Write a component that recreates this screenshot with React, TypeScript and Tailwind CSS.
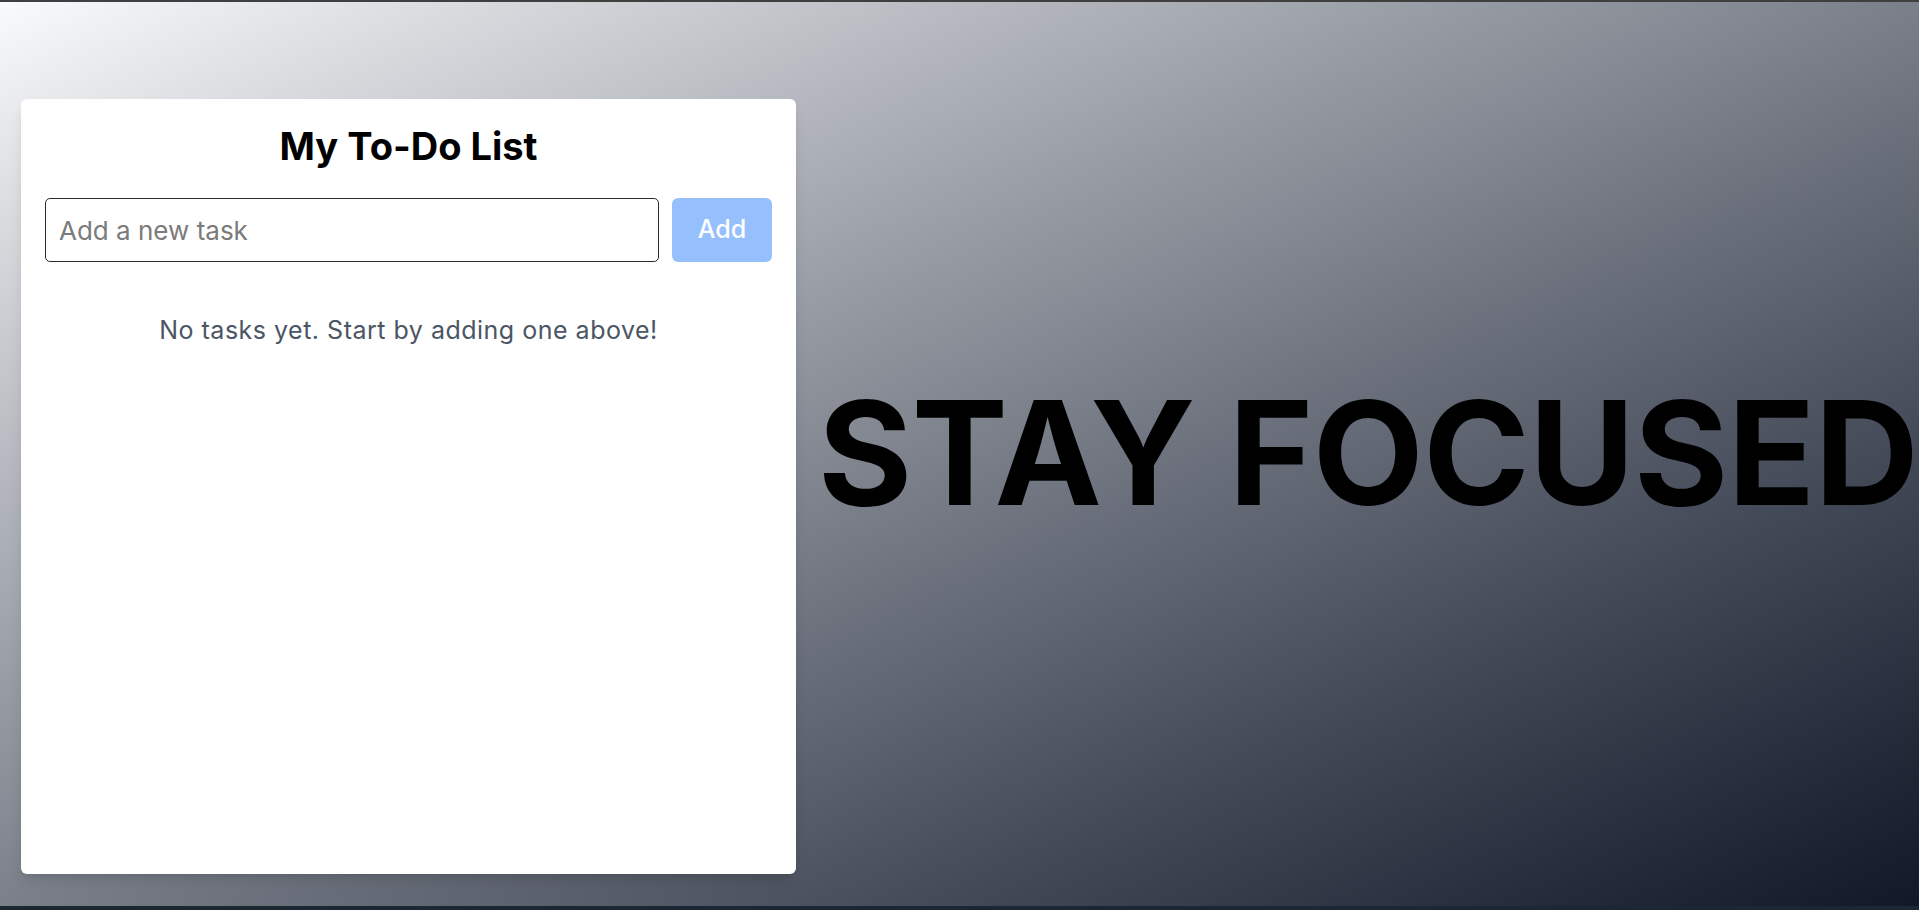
import React, { useState } from "react";

const font = { fontFamily: "Inter, 'Liberation Sans', sans-serif" };

const App = () => {
    const [task, setTask] = useState("");
    const [tasks, setTasks] = useState<string[]>([]);

    const addTask = () => {
        if (!task.trim()) return;
        setTasks([...tasks, task.trim()]);
        setTask("");
    };

    return (
        <div
            className="h-[910px] w-full overflow-hidden flex flex-col bg-[#1b2731]"
            style={font}
        >
            <div className="h-[2px] bg-[#3f3f3f]" />
            <main className="flex-1 flex flex-row overflow-hidden bg-gradient-to-br from-[#f9fafb] to-[#111827]">
                {/* left: the list card */}
                <section className="ml-[21px] mt-[97px] w-[775px] h-[775px] shrink-0 bg-white rounded-md shadow-lg p-6 flex flex-col">
                    <h1 className="mt-[3px] text-center text-[38px] leading-[40px] font-bold text-black">
                        My To-Do List
                    </h1>
                    <div className="flex flex-row gap-[13px] mt-[32px]">
                        <input
                            value={task}
                            onChange={(e) => setTask(e.target.value)}
                            placeholder="Add a new task"
                            className="flex-1 h-16 px-[13px] border border-[#2b2b2b] rounded-[5px] text-[26px] text-gray-800 placeholder:text-[#7b7b7b] outline-none"
                        />
                        <button
                            onClick={addTask}
                            disabled={!task.trim()}
                            className="w-[100px] h-16 rounded-md bg-[#96bffd] text-white text-[25px] font-medium"
                        >
                            Add
                        </button>
                    </div>
                    {tasks.length === 0 ? (
                        <p className="mt-[52px] text-center text-[25px] leading-8 tracking-[0.5px] text-[#4b5563]">
                            No tasks yet. Start by adding one above!
                        </p>
                    ) : (
                        <ul className="mt-8 flex flex-col gap-2">
                            {tasks.map((t, i) => (
                                <li key={i} className="text-xl text-gray-700">
                                    {t}
                                </li>
                            ))}
                        </ul>
                    )}
                </section>
                {/* right: big slogan */}
                <div className="flex-1 flex items-center pl-[22px] pb-[2px]">
                    <h2 className="whitespace-nowrap text-[144px] leading-none font-bold text-black tracking-[-0.5px]">
                        STAY FOCUSED
                    </h2>
                </div>
            </main>
            <div className="h-[4px] bg-[#1b2731]" />
        </div>
    );
};

export default App;
